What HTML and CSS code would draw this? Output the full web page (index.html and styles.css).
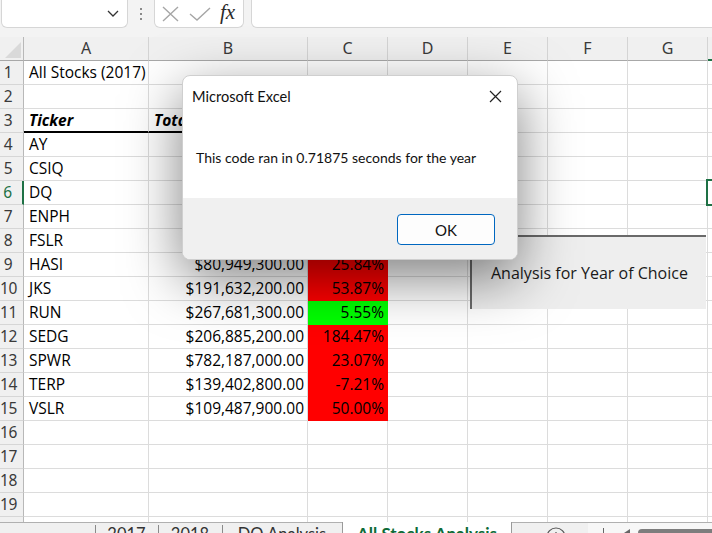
FILE: index.html
```html
<!DOCTYPE html>
<html>
<head>
<meta charset="utf-8">
<link rel="stylesheet" href="styles.css">
</head>
<body>
<div class="app">
  <div class="toolbar">
    <div class="namebox">
      <svg class="chev" width="12" height="7" viewBox="0 0 12 7"><polyline points="1,1 6,6 11,1" fill="none" stroke="#333" stroke-width="1.3"/></svg>
    </div>
    <div class="grip">
      <svg width="4" height="12" viewBox="0 0 4 12"><rect x="1" y="0" width="2" height="2" fill="#8a8a8a"/><rect x="1" y="5" width="2" height="2" fill="#8a8a8a"/><rect x="1" y="10" width="2" height="2" fill="#8a8a8a"/></svg>
    </div>
    <div class="fxbox">
      <svg class="ico-x" width="17" height="16" viewBox="0 0 17 16"><path d="M1 1 L16 15 M16 1 L1 15" stroke="#a6a6a6" stroke-width="1.4" fill="none"/></svg>
      <svg class="ico-ok" width="22" height="14" viewBox="0 0 22 14"><polyline points="1,7 8,13 21,1" fill="none" stroke="#a6a6a6" stroke-width="1.4"/></svg>
      <span class="fx">fx</span>
    </div>
    <div class="formula"></div>
  </div>

  <div class="sheet">
    <div class="grid">
      <div class="r hdr">
        <div class="corner"><svg width="24" height="24" viewBox="0 0 24 24"><polygon points="5,21 21,5 21,21" fill="#d9d9d9"/></svg></div>
        <div class="ch">A</div><div class="ch">B</div><div class="ch">C</div><div class="ch">D</div><div class="ch">E</div><div class="ch">F</div><div class="ch">G</div><div class="ch hsel">H</div>
      </div>
      <div class="r"><div class="h">1</div><div class="c">All Stocks (2017)</div><div class="c"></div><div class="c"></div><div class="c"></div><div class="c"></div><div class="c"></div><div class="c"></div><div class="c"></div></div>
      <div class="r"><div class="h">2</div><div class="c"></div><div class="c"></div><div class="c"></div><div class="c"></div><div class="c"></div><div class="c"></div><div class="c"></div><div class="c"></div></div>
      <div class="r"><div class="h">3</div><div class="c bi">Ticker</div><div class="c bi">Total Daily Volume</div><div class="c bi"></div><div class="c"></div><div class="c"></div><div class="c"></div><div class="c"></div><div class="c"></div></div>
      <div class="r"><div class="h">4</div><div class="c">AY</div><div class="c n"></div><div class="c n red"></div><div class="c"></div><div class="c"></div><div class="c"></div><div class="c"></div><div class="c"></div></div>
      <div class="r"><div class="h">5</div><div class="c">CSIQ</div><div class="c n"></div><div class="c n red"></div><div class="c"></div><div class="c"></div><div class="c"></div><div class="c"></div><div class="c"></div></div>
      <div class="r"><div class="h hrow">6</div><div class="c">DQ</div><div class="c n"></div><div class="c n red"></div><div class="c"></div><div class="c"></div><div class="c"></div><div class="c"></div><div class="c"></div></div>
      <div class="r"><div class="h">7</div><div class="c">ENPH</div><div class="c n"></div><div class="c n red"></div><div class="c"></div><div class="c"></div><div class="c"></div><div class="c"></div><div class="c"></div></div>
      <div class="r"><div class="h">8</div><div class="c">FSLR</div><div class="c n"></div><div class="c n red"></div><div class="c"></div><div class="c"></div><div class="c"></div><div class="c"></div><div class="c"></div></div>
      <div class="r"><div class="h">9</div><div class="c">HASI</div><div class="c n">$80,949,300.00</div><div class="c n red">25.84%</div><div class="c"></div><div class="c"></div><div class="c"></div><div class="c"></div><div class="c"></div></div>
      <div class="r"><div class="h">10</div><div class="c">JKS</div><div class="c n">$191,632,200.00</div><div class="c n red">53.87%</div><div class="c"></div><div class="c"></div><div class="c"></div><div class="c"></div><div class="c"></div></div>
      <div class="r"><div class="h">11</div><div class="c">RUN</div><div class="c n">$267,681,300.00</div><div class="c n green">5.55%</div><div class="c"></div><div class="c"></div><div class="c"></div><div class="c"></div><div class="c"></div></div>
      <div class="r"><div class="h">12</div><div class="c">SEDG</div><div class="c n">$206,885,200.00</div><div class="c n red">184.47%</div><div class="c"></div><div class="c"></div><div class="c"></div><div class="c"></div><div class="c"></div></div>
      <div class="r"><div class="h">13</div><div class="c">SPWR</div><div class="c n">$782,187,000.00</div><div class="c n red">23.07%</div><div class="c"></div><div class="c"></div><div class="c"></div><div class="c"></div><div class="c"></div></div>
      <div class="r"><div class="h">14</div><div class="c">TERP</div><div class="c n">$139,402,800.00</div><div class="c n red">-7.21%</div><div class="c"></div><div class="c"></div><div class="c"></div><div class="c"></div><div class="c"></div></div>
      <div class="r"><div class="h">15</div><div class="c">VSLR</div><div class="c n">$109,487,900.00</div><div class="c n red">50.00%</div><div class="c"></div><div class="c"></div><div class="c"></div><div class="c"></div><div class="c"></div></div>
      <div class="r"><div class="h">16</div><div class="c"></div><div class="c"></div><div class="c"></div><div class="c"></div><div class="c"></div><div class="c"></div><div class="c"></div><div class="c"></div></div>
      <div class="r"><div class="h">17</div><div class="c"></div><div class="c"></div><div class="c"></div><div class="c"></div><div class="c"></div><div class="c"></div><div class="c"></div><div class="c"></div></div>
      <div class="r"><div class="h">18</div><div class="c"></div><div class="c"></div><div class="c"></div><div class="c"></div><div class="c"></div><div class="c"></div><div class="c"></div><div class="c"></div></div>
      <div class="r"><div class="h">19</div><div class="c"></div><div class="c"></div><div class="c"></div><div class="c"></div><div class="c"></div><div class="c"></div><div class="c"></div><div class="c"></div></div>
      <div class="r"><div class="h">20</div><div class="c"></div><div class="c"></div><div class="c"></div><div class="c"></div><div class="c"></div><div class="c"></div><div class="c"></div><div class="c"></div></div>
    </div>
    <div class="selbox"></div>
    <div class="shape">Analysis for Year of Choice</div>
  </div>

  <div class="tabs">
    <div class="nav"><span class="tick"></span><span class="tick"></span></div>
    <div class="tab t1">2017</div>
    <div class="tab t2">2018</div>
    <div class="tab t3">DQ Analysis</div>
    <div class="tab active">All Stocks Analysis</div>
    <div class="tabrest">
      <svg class="add" width="20" height="20" viewBox="0 0 20 20"><circle cx="10" cy="10" r="9" fill="none" stroke="#555" stroke-width="1.2"/><path d="M10 5 V15 M5 10 H15" stroke="#555" stroke-width="1.2"/></svg>
    </div>
    <div class="scrollarea">
      <span class="vbar"></span>
      <svg class="larr" width="6" height="8" viewBox="0 0 6 8"><polygon points="6,0 0,4 6,8" fill="#666"/></svg>
      <span class="thumb"></span>
    </div>
  </div>
</div>

<div class="dialog">
  <div class="dlg-title"><span>Microsoft Excel</span>
    <svg width="13" height="13" viewBox="0 0 13 13"><path d="M1 1 L12 12 M12 1 L1 12" stroke="#222" stroke-width="1.2" fill="none"/></svg>
  </div>
  <div class="dlg-msg">This code ran in 0.71875 seconds for the year</div>
  <div class="dlg-foot"><div class="ok">OK</div></div>
</div>
</body>
</html>
```

FILE: styles.css
```css
body {
  margin: 0;
  width: 712px;
  height: 533px;
  overflow: hidden;
  background: #fff;
  position: relative;
  font-family: "Open Sans", sans-serif;
}

.app {
  display: flex;
  flex-direction: column;
  height: 533px;
}

/* ---------- toolbar ---------- */
.toolbar {
  height: 37px;
  flex: none;
  background: #f3f3f3;
  display: flex;
  align-items: flex-start;
  overflow: hidden;
}
.namebox {
  margin-left: 1px;
  width: 127px;
  height: 28px;
  box-sizing: border-box;
  background: #fff;
  border: 1px solid #d6d6d6;
  border-top: none;
  border-radius: 0 0 6px 6px;
  display: flex;
  justify-content: flex-end;
  align-items: center;
  padding-right: 8px;
}
.grip {
  width: 26px;
  height: 28px;
  display: flex;
  justify-content: center;
  align-items: center;
}
.fxbox {
  width: 90px;
  height: 28px;
  box-sizing: border-box;
  background: #fff;
  border: 1px solid #d6d6d6;
  border-top: none;
  border-radius: 0 0 6px 6px;
  display: flex;
  align-items: center;
  padding-left: 7px;
}
.ico-ok { margin-left: 10px; }
.fx {
  margin-left: 9px;
  font-family: "Liberation Serif", serif;
  font-style: italic;
  font-size: 21px;
  color: #2a2a2a;
  line-height: 20px;
  margin-top: -3px;
}
.formula {
  flex: 1;
  margin-left: 7px;
  margin-right: -8px;
  height: 28px;
  box-sizing: border-box;
  background: #fff;
  border: 1px solid #d6d6d6;
  border-top: none;
  border-radius: 0 0 6px 6px;
}

/* ---------- sheet ---------- */
.sheet {
  flex: 1;
  position: relative;
  overflow: hidden;
}
.r {
  display: grid;
  grid-template-columns: 24px 125px 159px 80px 80px 80px 80px 80px 40px;
  height: 24px;
}
.r > div {
  box-sizing: border-box;
  border-right: 1px solid #dcdcdc;
  border-bottom: 1px solid #dcdcdc;
  overflow: hidden;
  white-space: nowrap;
}
.hdr > div {
  background: #f0f0f0;
  border-bottom: 1px solid #a8a8a8;
  border-right: 1px solid #d4d4d4;
  font-family: "Noto Sans", sans-serif;
  font-size: 16px;
  color: #3a3a3a;
  text-align: center;
  line-height: 23px;
}
.hdr > .corner {
  border-right: 1px solid #b8b8b8;
}
.corner svg { display: block; }
.hdr > .hsel {
  border-bottom: 2px solid #1e7145;
  color: #1e7145;
}
.h {
  background: #f0f0f0;
  border-right: 1px solid #b8b8b8 !important;
  border-bottom: 1px solid #d6d6d6 !important;
  font-family: "Noto Sans", sans-serif;
  font-size: 15.5px;
  color: #3a3a3a;
  text-align: center;
  padding-right: 7px;
  line-height: 23px;
  letter-spacing: -0.4px;
}
.h.hrow {
  color: #1e7145;
  border-right: 2px solid #1e7145 !important;
}
.c {
  font-size: 15.5px;
  color: #000;
  line-height: 23px;
  padding: 0 3px 0 5px;
}
.c.n { text-align: right; }
.c.bi {
  font-weight: bold;
  font-style: italic;
  border-bottom: 2px solid #000;
}
.c.red { background: #ff0000; border-color: #ff0000; }
.c.green { background: #00ff00; border-color: #00ff00; }

.selbox {
  position: absolute;
  left: 706px;
  top: 142px;
  width: 30px;
  height: 27px;
  box-sizing: border-box;
  border: 2px solid #1e7145;
}
.shape {
  position: absolute;
  left: 470px;
  top: 198px;
  width: 236px;
  height: 74px;
  box-sizing: border-box;
  border-top: 2px solid #6a6a6a;
  border-left: 2px solid #6a6a6a;
  background: #eeeeee;
  padding-left: 19px;
  display: flex;
  align-items: center;
  font-size: 16px;
  color: #1a1a1a;
}

/* ---------- tabs ---------- */
.tabs {
  height: 11px;
  flex: none;
  overflow: hidden;
  display: flex;
  background: #f0f0f0;
  font-family: "Lato", sans-serif;
  font-size: 16.5px;
  color: #333;
}
.nav {
  width: 95px;
  flex: none;
  border-top: 1px solid #b0b0b0;
  position: relative;
}
.tick {
  display: inline-block;
  width: 1px;
  height: 4px;
  background: #999;
  margin-top: 7px;
  margin-left: 22px;
}
.tick + .tick { margin-left: 24px; }
.tab {
  flex: none;
  border-top: 1px solid #b0b0b0;
  text-align: center;
  line-height: 20px;
  height: 30px;
  position: relative;
  box-sizing: border-box;
  padding-top: 1px;
}
.tab::before {
  content: "";
  position: absolute;
  left: 0;
  top: 2px;
  width: 1px;
  height: 20px;
  background: #8a8a8a;
}
.t1 { width: 63px; }
.t2 { width: 64px; }
.t3 { width: 120px; }
.tab.active {
  width: 170px;
  background: #fff;
  border-top: none;
  border-left: 1px solid #9a9a9a;
  border-right: 1px solid #9a9a9a;
  color: #0e6b37;
  font-weight: bold;
  font-size: 17px;
  padding-top: 2px;
}
.tab.active::before { display: none; }
.tabrest {
  width: 76px;
  flex: none;
  border-top: 1px solid #b0b0b0;
  position: relative;
}
.add {
  display: block;
  margin-left: 34px;
  margin-top: 4px;
}
.scrollarea {
  flex: 1;
  border-top: 1px solid #b0b0b0;
  background: #f7f7f7;
  display: flex;
  align-items: flex-start;
}
.vbar {
  width: 1px;
  height: 8px;
  background: #666;
  margin: 5px 0 0 15px;
}
.larr { margin: 6px 0 0 20px; }
.thumb {
  flex: 1;
  height: 10px;
  margin: 6px 0 0 8px;
  background: #7d7d7d;
  border-radius: 4px 0 0 0;
}

/* ---------- dialog ---------- */
.dialog {
  position: absolute;
  left: 182px;
  top: 75px;
  width: 336px;
  height: 185px;
  box-sizing: border-box;
  border: 1px solid #cfcfcf;
  border-radius: 8px;
  background: #fff;
  overflow: hidden;
  box-shadow: 0 18px 56px rgba(0, 0, 0, 0.5);
  display: flex;
  flex-direction: column;
  font-family: "Lato", sans-serif;
  color: #111;
}
.dlg-title {
  height: 40px;
  flex: none;
  display: flex;
  align-items: center;
  justify-content: space-between;
  padding: 0 15px 0 9px;
  font-size: 14.6px;
}
.dlg-msg {
  height: 82px;
  flex: none;
  display: flex;
  align-items: center;
  padding-left: 13px;
  font-size: 14px;
}
.dlg-foot {
  flex: 1;
  background: #f0f0f0;
  display: flex;
  justify-content: flex-end;
  align-items: flex-start;
  padding: 16px 22px 0 0;
}
.ok {
  width: 98px;
  height: 31px;
  box-sizing: border-box;
  border: 1px solid #0067c0;
  border-radius: 4px;
  background: #fdfdfd;
  display: flex;
  align-items: center;
  justify-content: center;
  font-size: 15px;
  color: #111;
}
```
